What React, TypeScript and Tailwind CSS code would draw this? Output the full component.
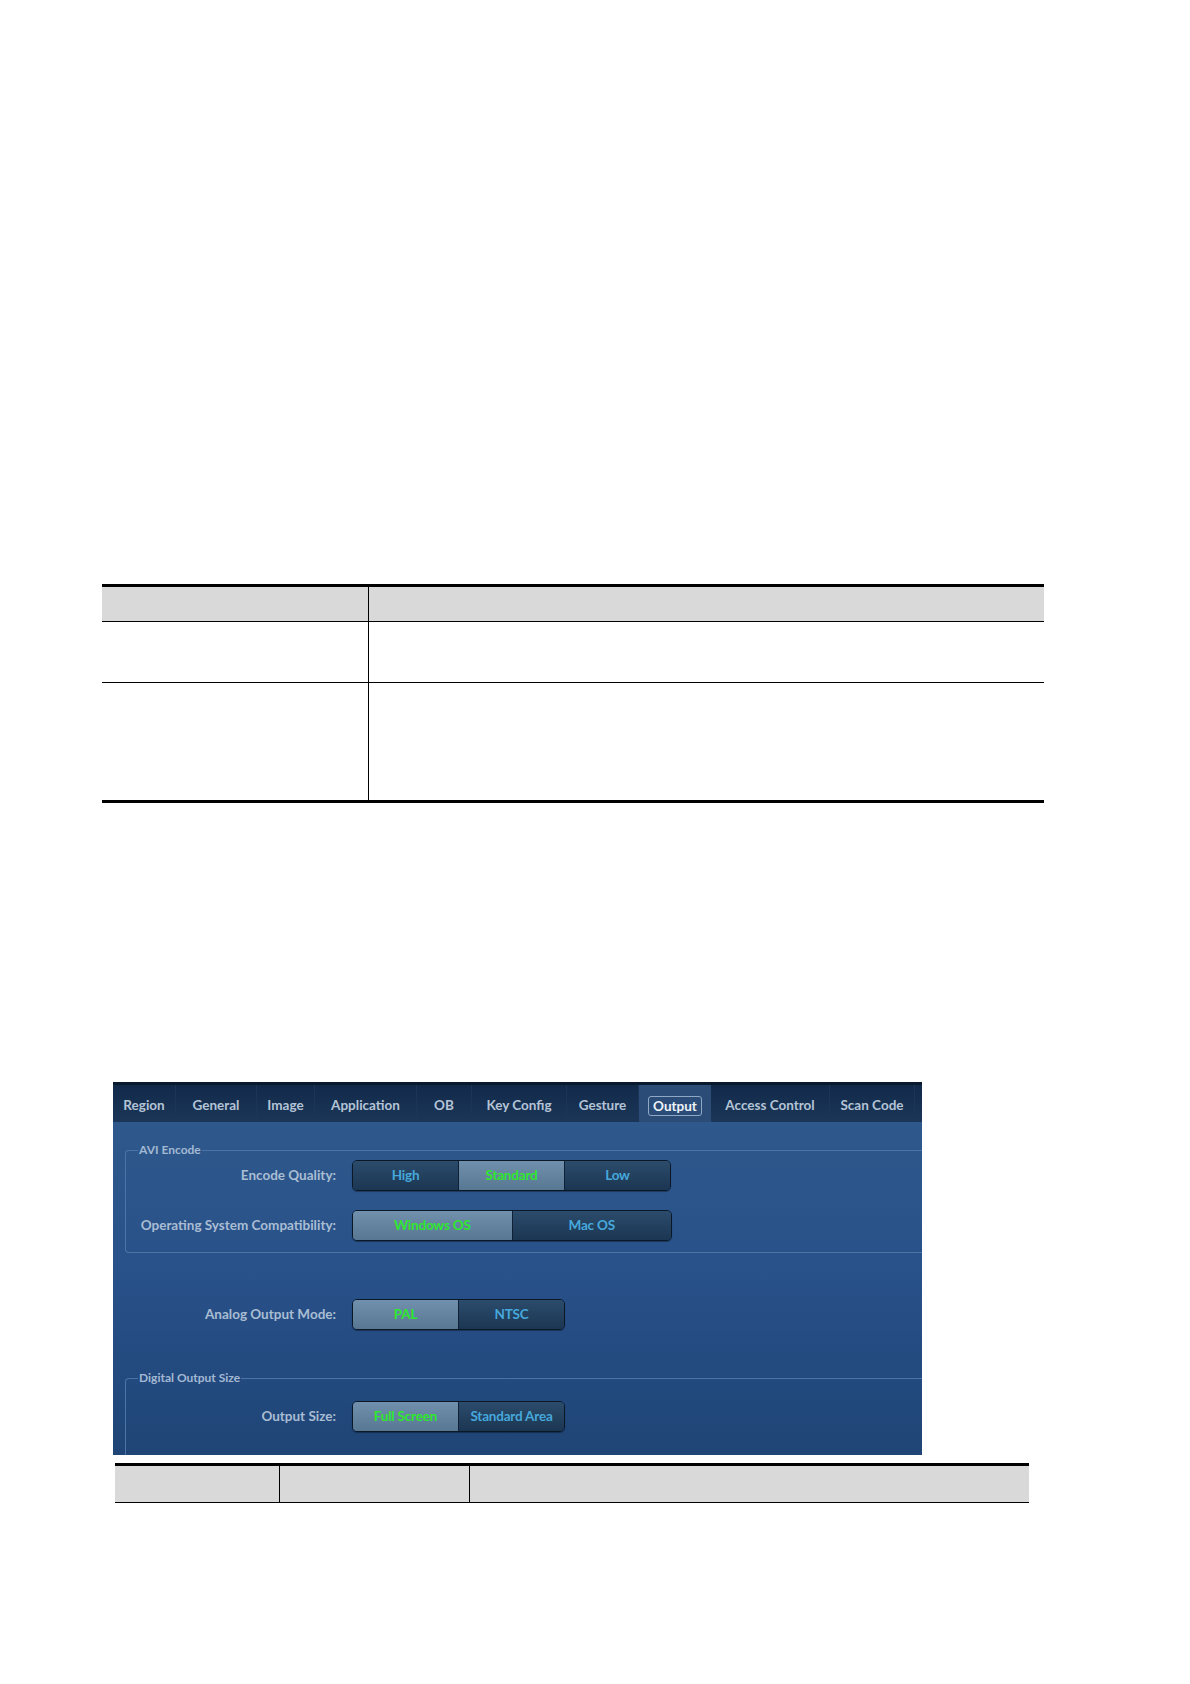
const TABS = [
  { label: "Region", w: "w-[63px]" },
  { label: "General", w: "w-[81px]" },
  { label: "Image", w: "w-[58px]" },
  { label: "Application", w: "w-[102px]" },
  { label: "OB", w: "w-[55px]" },
  { label: "Key Config", w: "w-[95px]" },
  { label: "Gesture", w: "w-[72px]" },
  { label: "Output", w: "w-[72px]", active: true },
  { label: "Access Control", w: "w-[119px]" },
  { label: "Scan Code", w: "w-[85px]" },
];

type Seg = { label: string; on?: boolean };

function Segmented({ items, width }: { items: Seg[]; width: string }) {
  return (
    <div
      className={`flex h-[31px] ${width} rounded-[5px] border border-[#0b1828] overflow-hidden shadow-[0_1px_1px_rgba(0,0,0,0.35)]`}
    >
      {items.map((s, i) => (
        <div
          key={s.label}
          className={`flex-1 flex items-center justify-center text-[13.5px] font-bold tracking-[-0.2px] ${
            i > 0 ? "border-l border-[#0f2136]" : ""
          } ${
            s.on
              ? "bg-linear-to-b from-[#7190ad] to-[#587792] text-[#2ee82e]"
              : "bg-linear-to-b from-[#2c4c6c] to-[#1b3652] text-[#46a8dc]"
          }`}
        >
          {s.label}
        </div>
      ))}
    </div>
  );
}

function Row({ label, children }: { label: string; children: React.ReactNode }) {
  return (
    <div className="flex items-center gap-[16px]">
      <div className="w-[210px] text-right text-[13.5px] font-bold text-[#a9bdd3] whitespace-nowrap">{label}</div>
      {children}
    </div>
  );
}

export default function App() {
  return (
    <div className="min-h-[1684px] w-[1190px] bg-white font-[Lato,sans-serif] pt-[584px]">
      {/* upper table */}
      <div className="ml-[102px] w-[942px] border-t-[3px] border-b-[3px] border-black">
        <div className="flex h-[35px] bg-[#d9d9d9] border-b border-black">
          <div className="w-[267px] border-r border-black" />
          <div className="flex-1" />
        </div>
        <div className="flex h-[61px] border-b border-black">
          <div className="w-[267px] border-r border-black" />
          <div className="flex-1" />
        </div>
        <div className="flex h-[117px]">
          <div className="w-[267px] border-r border-black" />
          <div className="flex-1" />
        </div>
      </div>

      {/* settings panel */}
      <div className="mt-[279px] ml-[113px] w-[809px] h-[373px] overflow-hidden bg-linear-to-b from-[#305b8c] via-[#29518a] to-[#1f4576]">
        <div className="flex h-[40px] border-t-[3px] border-[#0a1a2e] bg-linear-to-b from-[#122a4a] to-[#1b3658]">
          {TABS.map((t) => (
            <div
              key={t.label}
              className={`${t.w} flex items-center justify-center pt-[4px] text-[13.5px] font-bold ${
                t.active ? "bg-[#2a4c76] text-[#eef3f9]" : "text-[#b4c4d7] border-r border-[#1c3556]"
              }`}
            >
              {t.active ? (
                <span className="px-[4px] h-[20px] leading-[18px] rounded-[3px] border border-[#8ea8c6]">
                  {t.label}
                </span>
              ) : (
                t.label
              )}
            </div>
          ))}
        </div>

        <fieldset className="mt-[21px] ml-[12px] border-l border-t border-b border-[#4d74a6] rounded-tl-[4px] rounded-bl-[4px] pt-[3px] pb-[11px]">
          <legend className="ml-[12px] px-[1px] text-[12px] leading-[14px] font-bold text-[#a3b9d3]">
            AVI Encode
          </legend>
          <div className="flex flex-col gap-[19px]">
            <Row label="Encode Quality:">
              <Segmented
                width="w-[319px]"
                items={[{ label: "High" }, { label: "Standard", on: true }, { label: "Low" }]}
              />
            </Row>
            <Row label="Operating System Compatibility:">
              <Segmented width="w-[320px]" items={[{ label: "Windows OS", on: true }, { label: "Mac OS" }]} />
            </Row>
          </div>
        </fieldset>

        <div className="mt-[46px] pl-[13px]">
          <Row label="Analog Output Mode:">
            <Segmented width="w-[213px]" items={[{ label: "PAL", on: true }, { label: "NTSC" }]} />
          </Row>
        </div>

        <fieldset className="mt-[41px] ml-[12px] border-l border-t border-[#4d74a6] rounded-tl-[4px] pt-[16px] pb-[40px]">
          <legend className="ml-[12px] px-[1px] text-[12px] leading-[14px] font-bold text-[#a3b9d3]">
            Digital Output Size
          </legend>
          <Row label="Output Size:">
            <Segmented
              width="w-[213px]"
              items={[{ label: "Full Screen", on: true }, { label: "Standard Area" }]}
            />
          </Row>
        </fieldset>
      </div>

      {/* lower table */}
      <div className="mt-[8px] ml-[115px] w-[914px] flex h-[40px] bg-[#d9d9d9] border-t-[3px] border-b border-black">
        <div className="w-[165px] border-r border-black" />
        <div className="w-[190px] border-r border-black" />
        <div className="flex-1" />
      </div>
    </div>
  );
}
